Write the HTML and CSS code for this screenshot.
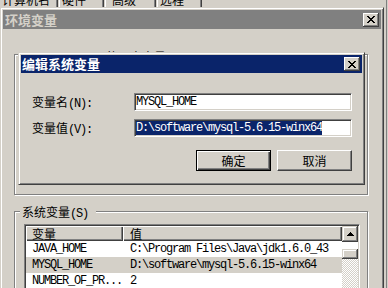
FILE: index.html
```html
<!DOCTYPE html>
<html lang="zh-CN">
<head>
	<meta charset="UTF-8">
	<title>编辑系统变量</title>
	<link rel="stylesheet" href="styles.css">
</head>
<body>
	<div class="tabs">
		<div class="tab t1"><span>计算机名</span></div>
		<div class="tab t2"><span>硬件</span></div>
		<div class="tab t3"><span>高级</span></div>
		<div class="tab t4"><span>远程</span></div>
	</div>
	<div class="win">
		<div class="cap off">
			<span>环境变量</span>
			<span class="xbtn"><svg width="8" height="7" viewBox="0 0 8 7"><path d="M0 0h2v1H0zM6 0h2v1H6zM1 1h2v1H1zM5 1h2v1H5zM2 2h4v1H2zM3 3h2v1H3zM2 4h4v1H2zM1 5h2v1H1zM5 5h2v1H5zM0 6h2v1H0zM6 6h2v1H6z" fill="#000"/></svg></span>
		</div>
		<div class="win-body">
			<div class="group user">
				<span class="legend"><span class="mono">Administrator </span>的用户变量<span class="mono">(U)</span></span>
			</div>
			<div class="group sys">
				<span class="legend">系统变量<span class="mono">(S)</span></span>
				<div class="lv">
					<div class="lv-main">
						<div class="lv-head"><div class="c1">变量</div><div class="c2">值</div></div>
						<div class="lv-row"><div class="c1 mono">JAVA_HOME</div><div class="c2 mono">C:\Program Files\Java\jdk1.6.0_43</div></div>
						<div class="lv-row hl"><div class="c1 mono">MYSQL_HOME</div><div class="c2 mono">D:\software\mysql-5.6.15-winx64</div></div>
						<div class="lv-row"><div class="c1 mono">NUMBER_OF_PR...</div><div class="c2 mono">2</div></div>
					</div>
					<div class="vscroll">
						<div class="sb-btn"><svg width="7" height="4" viewBox="0 0 7 4"><path d="M3 0h1v1H3zM2 1h3v1H2zM1 2h5v1H1zM0 3h7v1H0z" fill="#000"/></svg></div>
						<div class="sb-gap"></div>
						<div class="sb-thumb"></div>
						<div class="sb-track"></div>
					</div>
				</div>
			</div>

			<div class="dlg">
				<div class="cap">
					<span>编辑系统变量</span>
					<span class="xbtn"><svg width="8" height="7" viewBox="0 0 8 7"><path d="M0 0h2v1H0zM6 0h2v1H6zM1 1h2v1H1zM5 1h2v1H5zM2 2h4v1H2zM3 3h2v1H3zM2 4h4v1H2zM1 5h2v1H1zM5 5h2v1H5zM0 6h2v1H0zM6 6h2v1H6z" fill="#000"/></svg></span>
				</div>
				<div class="dlg-body">
					<div class="form">
						<label>变量名<span class="mono">(N):</span></label>
						<div class="field mono">MYSQL_HOME</div>
						<label>变量值<span class="mono">(V):</span></label>
						<div class="field mono"><span class="sel">D:\software\mysql-5.6.15-winx64</span></div>
					</div>
					<div class="btns">
						<div class="btn def">确定</div>
						<div class="btn">取消</div>
					</div>
				</div>
			</div>
		</div>
	</div>
</body>
</html>
```

FILE: styles.css
```css
body{
	margin:0;
	width:388px;
	height:288px;
	overflow:hidden;
	background:#d4d0c8 linear-gradient(90deg, transparent 386px, #808080 386px, #808080 387px, transparent 387px);
	font:12px "Noto Sans CJK SC", sans-serif;
	color:#000;
}
.mono{
	font-family:"Liberation Mono", "Noto Sans CJK SC", monospace;
	letter-spacing:-1.2px;
}

/* tab strip behind the window */
.tabs{
	display:flex;
	height:7px;
	overflow:hidden;
	margin-left:-3px;
}
.tab{
	height:7px;
	box-sizing:border-box;
	line-height:12px;
	border-left:1px solid #fff;
	border-right:1px solid #404040;
	box-shadow:inset -1px 0 #808080;
	white-space:nowrap;
}
.tab span{
	display:block;
	margin-top:-6px;
}
.t1{width:61px;padding-left:4px;}
.t2{width:45px;margin-left:1px;padding-left:2px;}
.t3{width:51px;margin-left:1px;padding-left:6px;}
.t4{width:45px;margin-left:1px;padding-left:2px;}

/* windows */
.win{
	width:384px;
	height:292px;
	box-sizing:border-box;
	border:1px solid;
	border-color:#d4d0c8 #404040 #404040 #d4d0c8;
	box-shadow:inset 1px 1px #fff, inset -1px -1px #808080;
	padding:2px;
}
.cap{
	display:flex;
	align-items:center;
	justify-content:space-between;
	height:19px;
	padding:0 2px 0 2px;
	font-weight:bold;
	font-size:13px;
	line-height:19px;
	color:#fff;
	background:#0a246a;
}
.cap.off{
	background:#808080;
	color:#d4d0c8;
}
.xbtn{
	width:16px;
	height:14px;
	box-sizing:border-box;
	display:flex;
	align-items:center;
	justify-content:center;
	background:#d4d0c8;
	box-shadow:inset -1px -1px #404040, inset 1px 1px #fff, inset -2px -2px #808080;
}
.win-body{
	position:relative;
	display:flow-root;
}

/* group boxes */
.group{
	position:relative;
	margin-left:11px;
	width:354px;
	box-sizing:border-box;
	border:1px solid #808080;
	box-shadow:1px 1px #fff, inset 1px 1px #fff;
}
.group.user{
	margin-top:25px;
	height:141px;
}
.group.sys{
	margin-top:16px;
	height:90px;
	padding:12px 0 0 9px;
}
.legend{
	position:absolute;
	top:-6px;
	left:5px;
	padding:0 8px 0 2px;
	line-height:12px;
	background:#d4d0c8;
	white-space:nowrap;
}
.user .legend{
	top:-4px;
}

/* list view */
.lv{
	display:flex;
	width:336px;
	height:80px;
	box-sizing:border-box;
	border:1px solid;
	border-color:#808080 #fff #fff #808080;
	padding:1px;
	box-shadow:inset 1px 1px #404040, inset -1px -1px #d4d0c8;
	background:#fff;
}
.lv-main{
	width:316px;
	background:#fff;
}
.lv-head{
	display:flex;
	height:15px;
}
.lv-head div{
	background:#d4d0c8;
	line-height:15px;
	box-shadow:inset 1px 1px #fff, inset -1px -1px #404040, inset -2px -2px #808080;
}
.c1{
	width:97px;
	box-sizing:border-box;
	padding-left:6px;
	white-space:nowrap;
	overflow:hidden;
}
.c2{
	width:219px;
	box-sizing:border-box;
	padding-left:7px;
	white-space:nowrap;
	overflow:hidden;
}
.lv-row{
	display:flex;
	height:16px;
	line-height:16px;
}
.lv-row.hl{
	background:#d4d0c8;
}
.vscroll{
	width:16px;
	display:flex;
	flex-direction:column;
}
.sb-btn,.sb-thumb{
	background:#d4d0c8;
	box-shadow:inset -1px -1px #404040, inset 1px 1px #d4d0c8, inset -2px -2px #808080, inset 2px 2px #fff;
}
.sb-btn{
	height:16px;
	display:flex;
	align-items:center;
	justify-content:center;
}
.sb-gap{
	height:7px;
	background:#fff;
}
.sb-thumb{
	height:10px;
}
.sb-track{
	flex:1;
	background:conic-gradient(#fff 25%, #d4d0c8 0 50%, #fff 0 75%, #d4d0c8 0) 0 0/2px 2px;
}

/* edit dialog */
.dlg{
	position:absolute;
	left:15px;
	top:23px;
	width:347px;
	height:133px;
	box-sizing:border-box;
	border:1px solid;
	border-color:#d4d0c8 #404040 #404040 #d4d0c8;
	box-shadow:inset 1px 1px #fff, inset -1px -1px #808080;
	padding:2px;
	background:#d4d0c8;
}
.dlg .cap{
	height:18px;
	line-height:18px;
	padding-left:1px;
}
.dlg-body{
	padding:20px 10px 0 11px;
}
.form{
	display:grid;
	grid-template-columns:102px 218px;
	grid-auto-rows:18px;
	row-gap:8px;
	align-items:center;
}
.field{
	height:18px;
	box-sizing:border-box;
	border:1px solid;
	border-color:#808080 #fff #fff #808080;
	box-shadow:inset 1px 1px #404040, inset -1px -1px #d4d0c8;
	background:#fff;
	padding:1px;
	line-height:14px;
	white-space:nowrap;
	overflow:hidden;
}
.sel{
	background:#0a246a;
	color:#fff;
}
.btns{
	display:flex;
	justify-content:flex-end;
	gap:6px;
	margin-top:13px;
}
.btn{
	width:75px;
	height:21px;
	box-sizing:border-box;
	display:flex;
	align-items:center;
	justify-content:center;
	border:1px solid;
	border-color:#fff #404040 #404040 #fff;
	box-shadow:inset -1px -1px #808080;
}
.btn.def{
	border-color:#000;
	box-shadow:inset 1px 1px #fff, inset -1px -1px #404040, inset -2px -2px #808080;
}
```
